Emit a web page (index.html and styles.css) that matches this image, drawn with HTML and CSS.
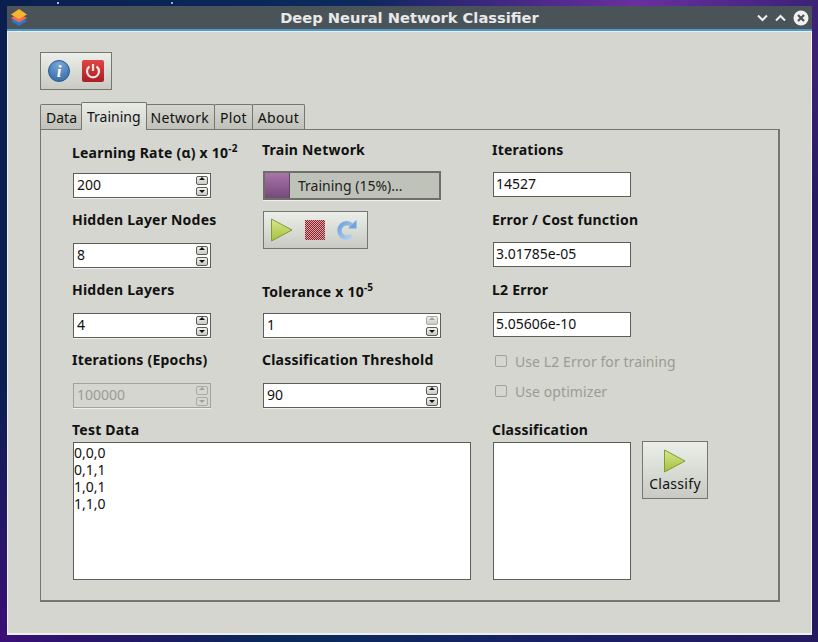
FILE: index.html
```html
<!DOCTYPE html>
<html lang="en">
  <head>
    <meta charset="UTF-8" />
    <title>Deep Neural Network Classifier</title>
    <link rel="stylesheet" href="styles.css">
  </head>
  <body>
    <svg class="defs" width="0" height="0">
      <defs>
        <linearGradient id="play-fill" x1="0" y1="0" x2="0" y2="1">
          <stop offset="0" stop-color="#d9e58f" />
          <stop offset="1" stop-color="#a3c13c" />
        </linearGradient>
        <linearGradient id="power-fill" x1="0" y1="0" x2="0" y2="1">
          <stop offset="0" stop-color="#e04444" />
          <stop offset="1" stop-color="#a81f24" />
        </linearGradient>
        <linearGradient id="refresh-fill" x1="0" y1="0" x2="1" y2="1">
          <stop offset="0" stop-color="#6fa3e0" />
          <stop offset="1" stop-color="#b9d2ee" />
        </linearGradient>
        <radialGradient id="info-fill" cx="0.5" cy="0.2" r="0.9">
          <stop offset="0" stop-color="#7ba6d6" />
          <stop offset="1" stop-color="#2f66a4" />
        </radialGradient>
        <pattern id="checker" width="2" height="2" patternUnits="userSpaceOnUse">
          <rect width="2" height="2" fill="#d9a9a9" />
          <rect width="1" height="1" fill="#8c1f2a" />
          <rect x="1" y="1" width="1" height="1" fill="#8c1f2a" />
        </pattern>
      </defs>
    </svg>

    <div class="window">
      <header class="titlebar">
        <svg class="app-icon" width="18" height="18" viewBox="0 0 18 18">
          <path d="M9 7.500 17 12 9 17 1 12z" fill="#2f76c8" />
          <path d="M9 4.500 17 9 9 13.500 1 9z" fill="#ef6a5a" />
          <path d="M9 0 17 5.500 9 10 1 5.500z" fill="#f5b52e" />
        </svg>
        <h1>Deep Neural Network Classifier</h1>
        <div class="wm-buttons">
          <svg width="11" height="10" viewBox="0 0 11 10"><path d="M1 2.500 5.500 7 10 2.500" fill="none" stroke="#f0f0f0" stroke-width="2" /></svg>
          <svg width="11" height="10" viewBox="0 0 11 10"><path d="M1 7.500 5.500 3 10 7.500" fill="none" stroke="#f0f0f0" stroke-width="2" /></svg>
          <svg width="16" height="16" viewBox="0 0 16 16"><circle cx="8" cy="8" r="7.500" fill="#f0f0f0" /><path d="M5 5l6 6M11 5l-6 6" stroke="#4a5358" stroke-width="2.200" /></svg>
        </div>
      </header>

      <main class="content">
        <div class="toolbar">
          <button class="tool-btn">
            <svg width="22" height="22" viewBox="0 0 22 22">
              <circle cx="11" cy="11" r="10.500" fill="url(#info-fill)" stroke="#2a5a94" />
              <text x="11" y="17" class="info-i">i</text>
            </svg>
          </button>
          <button class="tool-btn">
            <svg width="22" height="22" viewBox="0 0 22 22">
              <rect width="22" height="22" rx="2" fill="url(#power-fill)" />
              <path d="M7.500 6.500A6 6 0 1 0 14.500 6.500" fill="none" stroke="#f6e4e4" stroke-width="2.200" />
              <path d="M11 4v7" stroke="#f6e4e4" stroke-width="2.200" />
            </svg>
          </button>
        </div>

        <nav class="tabs">
          <span class="tab first">Data</span>
          <span class="tab active">Training</span>
          <span class="tab wide network">Network</span>
          <span class="tab wide">Plot</span>
          <span class="tab wide">About</span>
        </nav>

        <section class="panel">
          <div class="columns">
            <div class="col col-left">
              <label>Learning Rate (α) x 10<sup>-2</sup></label>
              <div class="spin"><input value="200" /><span class="arrows"><i class="up"></i><i class="down"></i></span></div>
              <label>Hidden Layer Nodes</label>
              <div class="spin"><input value="8" /><span class="arrows"><i class="up"></i><i class="down"></i></span></div>
              <label>Hidden Layers</label>
              <div class="spin"><input value="4" /><span class="arrows"><i class="up"></i><i class="down"></i></span></div>
              <label>Iterations (Epochs)</label>
              <div class="spin disabled"><input value="100000" disabled /><span class="arrows"><i class="up"></i><i class="down"></i></span></div>
            </div>

            <div class="col col-mid">
              <label>Train Network</label>
              <div class="progress"><span class="bar"></span><span class="progress-text">Training (15%)...</span></div>
              <div class="train-tools">
                <svg width="22" height="24" viewBox="0 0 22 24"><path d="M.5 1 21 12 .5 23z" fill="url(#play-fill)" stroke="#7f9e32" /></svg>
                <svg width="20" height="20" viewBox="0 0 20 20"><rect width="20" height="20" fill="url(#checker)" /></svg>
                <svg width="20" height="20" viewBox="0 0 20 20">
                  <path d="M14.800 5.400A7.200 7.200 0 1 0 14.800 15.600" fill="none" stroke="url(#refresh-fill)" stroke-width="4.500" />
                  <path d="M19.500 0V8.500H11z" fill="#6fa3e0" />
                </svg>
              </div>
              <label class="tol">Tolerance x 10<sup>-5</sup></label>
              <div class="spin"><input value="1" /><span class="arrows"><i class="up off"></i><i class="down"></i></span></div>
              <label>Classification Threshold</label>
              <div class="spin"><input value="90" /><span class="arrows"><i class="up"></i><i class="down"></i></span></div>
            </div>

            <div class="col col-right">
              <label>Iterations</label>
              <input class="line" value="14527" />
              <label>Error / Cost function</label>
              <input class="line" value="3.01785e-05" />
              <label>L2 Error</label>
              <input class="line" value="5.05606e-10" />
              <div class="check"><span class="box"></span>Use L2 Error for training</div>
              <div class="check"><span class="box"></span>Use optimizer</div>
            </div>
          </div>

          <div class="bottom">
            <div class="test-data">
              <label>Test Data</label>
              <textarea>0,0,0
0,1,1
1,0,1
1,1,0</textarea>
            </div>
            <div class="classification">
              <label>Classification</label>
              <textarea></textarea>
            </div>
            <button class="classify">
              <svg width="22" height="24" viewBox="0 0 22 24"><path d="M.5 1 21 12 .5 23z" fill="url(#play-fill)" stroke="#7f9e32" /></svg>
              Classify
            </button>
          </div>
        </section>
      </main>
    </div>
  </body>
</html>
```

FILE: styles.css
```css
html,
body {
  height: 100%;
  margin: 0;
  overflow: hidden;
}
body {
  box-sizing: border-box;
  padding: 6px 6px 8px 7px;
  font: 14px "Noto Sans", "Open Sans", sans-serif;
  color: #111;
  background:
    radial-gradient(circle at 58px 3px, #9fc0e0 0, #9fc0e0 1px, transparent 1.5px),
    radial-gradient(circle at 172px 3px, #8fb0d8 0, #8fb0d8 1px, transparent 1.5px),
    radial-gradient(circle at 78% 0, #6a2fa0 0, rgba(90, 40, 150, 0) 30%),
    radial-gradient(circle at 0 100%, #3a0f78 0, rgba(50, 15, 110, 0) 25%),
    linear-gradient(90deg, #0a1f50 0, #0b2a5c 40%, #1a1f66 70%, #241a60 100%);
}
.defs {
  position: absolute;
}

.window {
  height: 100%;
  display: flex;
  flex-direction: column;
}
.titlebar {
  flex: 0 0 23px;
  display: flex;
  align-items: center;
  position: relative;
  background: #4a5358;
  border-bottom: 2px solid #4a9ad4;
}
.app-icon {
  margin-left: 3px;
}
.titlebar h1 {
  position: absolute;
  left: 0;
  right: 0;
  margin: 0;
  text-align: center;
  font: bold 14.67px "DejaVu Sans", sans-serif;
  color: #e8e8e8;
}
.wm-buttons {
  margin-left: auto;
  margin-right: 3px;
  display: flex;
  align-items: center;
  gap: 7px;
}

.content {
  flex: 1;
  box-sizing: border-box;
  padding: 20px 31px 31px 32px;
  background: #d4d6cf;
  border: 1px solid #eef0ec;
  border-bottom-width: 2px;
}

.toolbar {
  display: flex;
  box-sizing: border-box;
  height: 38px;
  width: 72px;
  padding-left: 7px;
  align-items: center;
  gap: 12px;
  border: 1px solid #75776f;
  background: linear-gradient(#eceee9, #c8cac3);
}
.tool-btn {
  display: flex;
  padding: 0;
  border: 0;
  background: none;
}
.info-i {
  font: italic bold 17px "Liberation Serif", serif;
  fill: #fff;
  text-anchor: middle;
}

.tabs {
  display: flex;
  align-items: flex-end;
  height: 27px;
  margin-top: 12px;
}
.tab {
  box-sizing: border-box;
  height: 25px;
  padding: 3px 5px 0;
  border: 1px solid #75776f;
  border-bottom: 0;
  border-radius: 2px 2px 0 0;
  margin-right: -1px;
  background: linear-gradient(#d4d6cf, #c0c2ba);
}
.tab.first {
  padding-right: 4px;
}
.tab.network {
  padding-left: 4px;
}
.tab.wide {
  letter-spacing: 0.3px;
}
.tab.active {
  position: relative;
  z-index: 1;
  height: 28px;
  padding-top: 4px;
  margin-bottom: -1px;
  background: linear-gradient(#e8eae6, #d4d6cf);
}

.panel {
  box-sizing: border-box;
  height: 473px;
  padding: 10px 31px 21px;
  border: 1px solid #75776f;
  border-bottom-width: 2px;
  border-right-width: 2px;
}
.columns {
  display: flex;
}
.col {
  display: flex;
  flex-direction: column;
}
.col-left {
  width: 190px;
}
.col-mid {
  width: 230px;
}
.col-right {
  width: 190px;
}

label {
  display: block;
  height: 20px;
  margin: 12px 0 13px;
  font-weight: bold;
  line-height: 20px;
  letter-spacing: 0.22px;
  white-space: nowrap;
}
.col-left label:first-child {
  margin: 3px 0 10px;
}
.col-mid label:first-child {
  margin: 0 0 11px;
}
.col-right label {
  margin: 13px 0 12px;
}
.col-right label:first-child {
  margin-top: 0;
}
label.tol {
  margin: 33px 0 11px;
}
sup {
  font-size: 10px;
  line-height: 0;
}
input,
textarea {
  font: inherit;
  color: #111;
}

.spin {
  box-sizing: border-box;
  width: 138px;
  height: 25px;
  margin-left: 1px;
  display: flex;
  align-items: center;
  background: #fff;
  border: 1px solid #5c5e58;
  box-shadow: 0 1px 0 #f0f1ee;
}
.col-mid .spin {
  width: 178px;
}
.spin input {
  flex: 1;
  min-width: 0;
  border: 0;
  padding: 0 0 2px 3px;
  background: none;
  outline: none;
}
.arrows {
  display: flex;
  flex-direction: column;
  gap: 2px;
  margin-right: 2px;
}
.arrows i {
  position: relative;
  display: block;
  width: 10px;
  height: 7px;
  border: 1px solid #5c5e58;
  border-radius: 2px;
  background: linear-gradient(#f0f1ee, #c8cac3);
}
.arrows i:after {
  content: "";
  position: absolute;
  left: 1.500px;
  border: 3.500px solid transparent;
}
.arrows .up:after {
  top: -3px;
  border-bottom-color: #111;
}
.arrows .down:after {
  top: 2px;
  border-top-color: #111;
}
.arrows .off {
  border-color: #a9aba4;
}
.arrows .off:after {
  border-bottom-color: #a0a29b;
}
.spin.disabled {
  background: #d4d6cf;
  border-color: #a0a29b;
}
.spin.disabled input {
  color: #9a9c95;
}
.spin.disabled .arrows i {
  border-color: #a9aba4;
  background: #d4d6cf;
}
.spin.disabled .arrows .up:after {
  border-bottom-color: #a0a29b;
}
.spin.disabled .arrows .down:after {
  border-top-color: #a0a29b;
}

.progress {
  box-sizing: border-box;
  width: 178px;
  height: 29px;
  margin-left: 1px;
  display: flex;
  align-items: center;
  border: 2px solid #6d6f68;
  background: #bfc2b9;
  box-shadow: 0 1px 0 #f0f1ee;
}
.bar {
  box-sizing: border-box;
  width: 25px;
  height: 100%;
  background: linear-gradient(#a974aa, #744a78);
  border-right: 1px solid #5c4860;
}
.progress-text {
  margin-left: 8px;
  color: #222;
}
.train-tools {
  box-sizing: border-box;
  width: 105px;
  height: 38px;
  margin: 11px 0 0 1px;
  display: flex;
  align-items: center;
  gap: 12px;
  padding-left: 7px;
  border: 1px solid #75776f;
  background: linear-gradient(#eceee9, #c8cac3);
}

.line {
  box-sizing: border-box;
  width: 138px;
  height: 25px;
  margin-left: 1px;
  padding: 0 3px 2px 2px;
  border: 1px solid #5c5e58;
  background: #fff;
  outline: none;
}
.check {
  display: flex;
  align-items: center;
  gap: 8px;
  height: 20px;
  margin-top: 10px;
  color: #9a9c95;
  letter-spacing: 0.08px;
}
.line + .check {
  margin-top: 14px;
}
.box {
  width: 10px;
  height: 10px;
  margin-left: 3px;
  border: 1px solid #a0a29b;
  border-radius: 2px;
}

.bottom {
  display: flex;
  margin-top: 12px;
}
.bottom label {
  margin: 0 0 2px;
}
.bottom textarea {
  display: block;
  box-sizing: border-box;
  height: 138px;
  margin-left: 1px;
  padding: 1px 0;
  border: 1px solid #5c5e58;
  border-radius: 0;
  background: #fff;
  resize: none;
  outline: none;
  line-height: 17px;
  overflow: hidden;
}
.test-data {
  width: 420px;
}
.test-data textarea {
  width: 398px;
}
.classification textarea {
  width: 138px;
}
.classify {
  box-sizing: border-box;
  width: 66px;
  height: 58px;
  margin: 21px 0 0 11px;
  padding: 7px 0 0;
  display: flex;
  flex-direction: column;
  align-items: center;
  gap: 1px;
  font: inherit;
  letter-spacing: 0.3px;
  color: #111;
  border: 1px solid #75776f;
  background: linear-gradient(#eceee9, #c8cac3);
}
```
